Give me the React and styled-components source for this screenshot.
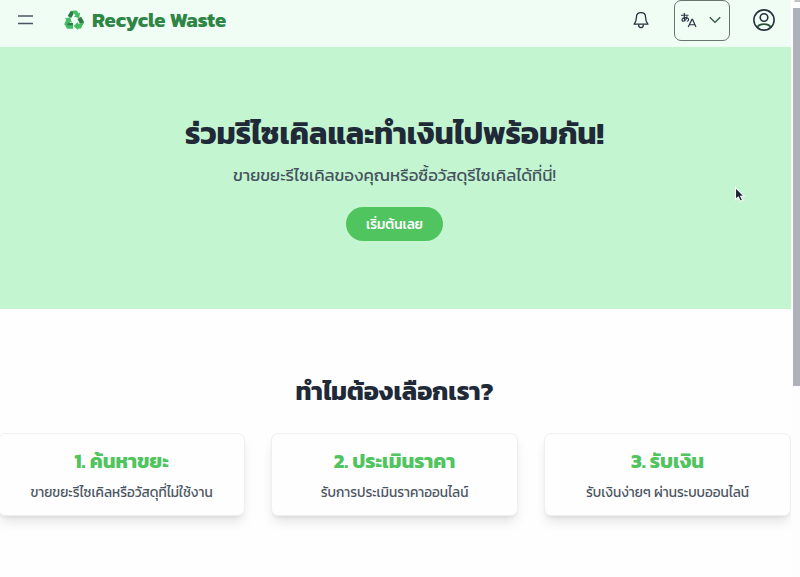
import React from 'react';
import styled, { createGlobalStyle } from 'styled-components';

const GlobalStyle = createGlobalStyle`
  * { box-sizing: border-box; }
  html, body { margin: 0; height: 577px; overflow: hidden; background: #fefefe; }
  body { font-family: Kanit, "Noto Sans", "Noto Sans Thai", sans-serif; color: #1f2937; }
`;

const Shell = styled.div`
  display: flex;
  width: 800px;
  height: 577px;
  position: relative;
`;

const Page = styled.div`
  width: 791px;
  overflow: hidden;
`;

const ScrollTrack = styled.div`
  width: 9px;
  padding: 8px 0 0 1.5px;
  background: #fdfdfd;
`;

const ScrollThumb = styled.div`
  height: 378px;
  background: #aeb1b9;
`;

const ScrollUp = styled.svg`
  position: absolute;
  top: 0;
  right: 0;
  display: block;
`;

const Header = styled.header`
  display: flex;
  align-items: center;
  height: 47px;
  padding: 0 15px 7px 17px;
  background: #f0fdf5;
`;

const Brand = styled.div`
  display: flex;
  align-items: center;
  gap: 8px;
  height: 40px;
  margin-left: 30px;
`;

const Actions = styled.div`
  display: flex;
  align-items: center;
  margin-left: auto;
`;

const LanguageButton = styled.div`
  display: flex;
  align-items: center;
  justify-content: space-between;
  width: 56px;
  height: 41px;
  margin: 0 22px 0 24px;
  padding: 0 8px 1px 5px;
  border: 1px solid #69746f;
  border-radius: 7px;
`;

const Hero = styled.section`
  display: flex;
  flex-direction: column;
  align-items: center;
  height: 261.5px;
  padding: 65px 2px 0 0;
  background: #c3f6d0;
`;

const Line = styled.div`
  display: flex;
  align-items: center;
  justify-content: center;
  height: ${(p) => p.$h}px;
`;

const Text = styled.span`
  white-space: nowrap;
  font-size: ${(p) => p.$size}px;
  font-weight: ${(p) => p.$weight || 400};
  line-height: 1;
  color: ${(p) => p.$color};
`;

const StartButton = styled.div`
  display: flex;
  align-items: center;
  justify-content: center;
  width: 97px;
  height: 34px;
  margin-top: 12px;
  padding-top: 2px;
  border-radius: 17px;
  background: #50c45e;
`;

const Features = styled.section`
  padding-top: 65px;
`;

const FeaturesHeading = styled(Line)`
  padding-right: 2px;
`;

const CardGrid = styled.div`
  display: grid;
  grid-template-columns: repeat(3, 247px);
  gap: 26px;
  margin: 23.5px 0 0 -2px;
`;

const Card = styled.article`
  height: 83px;
  padding: 12px 0 0;
  border: 1px solid #eeeff1;
  border-radius: 7px;
  background: #fefefe;
  box-shadow: 0 8px 12px -2px rgba(0, 0, 0, 0.1), 0 3px 5px -3px rgba(0, 0, 0, 0.1);
`;

const Pointer = styled.svg`
  position: absolute;
  left: 734px;
  top: 186px;
`;

const MenuIcon = () => (
  <svg width="17" height="12" viewBox="0 0 17 12" fill="none" stroke="#4b5563" strokeWidth="1.3">
    <path d="M1 2H16M1 9.5H16" />
  </svg>
);

const RecycleIcon = () => (
  <svg width="20" height="20" viewBox="0 0 20 20">
    <path fill="#43bd63" d="M7 .8 12.5.6 14.6 3.2l1.5-.8-.8 5.8-5.4-1.6 1.6-1L9 2z" />
    <path fill="#2c7b46" d="M6.6 1 9.4 1.8 9.5 4 7.2 8 3.7 6z" />
    <path fill="#43bd63" d="M.7 8.500 6.100 7.200 8 12.900 6.200 12.100 4.400 15.600.3 14.400 2.200 9.700z" />
    <path fill="#43bd63" d="M.3 13.8 3 13.3 9 13.8V18.8H3z" />
    <path fill="#2c7b46" d="M3.8 13H9v2.2H3.2z" />
    <path fill="#2c7b46" d="m13.4 9 3.7-2.3 2.9 5-1.3 3.6-3.1-2.3z" />
    <path fill="#43bd63" d="m19.9 12-2.9 6.5-3.2.2v1.2L9.7 16l4.1-4v1.5l3.2-.1z" />
  </svg>
);

const BellIcon = () => (
  <svg width="18" height="20" viewBox="0 0 18 20" fill="none" stroke="#27313d" strokeWidth="1.3" strokeLinejoin="round">
    <path d="M9 2.7c-2.8 0-4.6 2-4.6 4.8 0 3.5-.5 4.7-2.3 6.7h13.8c-1.8-2-2.3-3.2-2.3-6.7C13.6 4.7 11.8 2.7 9 2.7z" />
    <path d="M6.7 14.5v.8a2.3 2.3 0 0 0 4.6 0v-.8" />
  </svg>
);

const LanguageIcon = () => (
  <svg width="18" height="18" viewBox="0 0 18 18" fill="none" stroke="#27313d" strokeWidth="1.15">
    <path d="M1 4.2h7.500M4.300 2v5.500c0 1.100.3 1.800.9 2.600M7 5.300c-.3 2.600-2 4.900-3.800 4.900-1.900 0-1.700-3.500 2-3.600 2.500 0 3.600.9 3.400 2.100-.1.900-.9 1.400-1.800 1.500" />
    <path d="M8.200 16 11.900 8.400h.6L16 16M9.400 13.700h5.500" />
  </svg>
);

const ChevronIcon = () => (
  <svg width="12" height="8" viewBox="0 0 12 8" fill="none" stroke="#28503a" strokeWidth="1.3">
    <path d="m.8 1.2 5.2 5.2 5.2-5.2" />
  </svg>
);

const ProfileIcon = () => (
  <svg width="24" height="24" viewBox="0 0 24 24" fill="none" stroke="#27313d" strokeWidth="1.6">
    <circle cx="12" cy="12" r="10.1" />
    <circle cx="12" cy="9.5" r="3.8" />
    <path d="M5.4 19c1.2-2 3-2.9 6.6-2.9s5.4.9 6.6 2.9" stroke="#28503a" />
  </svg>
);

const features = [
  { title: '1. ค้นหาขยะ', detail: 'ขายขยะรีไซเคิลหรือวัสดุที่ไม่ใช้งาน' },
  { title: '2. ประเมินราคา', detail: 'รับการประเมินราคาออนไลน์' },
  { title: '3. รับเงิน', detail: 'รับเงินง่ายๆ ผ่านระบบออนไลน์' },
];

export default function App() {
  return (
    <Shell>
      <GlobalStyle />
      <Page>
        <Header>
          <MenuIcon />
          <Brand>
            <RecycleIcon />
            <Text $size={20.3} $weight={700} $color="#2f8545">Recycle Waste</Text>
          </Brand>
          <Actions>
            <BellIcon />
            <LanguageButton>
              <LanguageIcon />
              <ChevronIcon />
            </LanguageButton>
            <ProfileIcon />
          </Actions>
        </Header>
        <Hero>
          <Line $h={44}><Text $size={30.4} $weight={700} $color="#1f2937">ร่วมรีไซเคิลและทำเงินไปพร้อมกัน!</Text></Line>
          <Line $h={39}><Text $size={16.85} $color="#46525f">ขายขยะรีไซเคิลของคุณหรือซื้อวัสดุรีไซเคิลได้ที่นี่!</Text></Line>
          <StartButton><Text $size={13.5} $weight={500} $color="#fff">เริ่มต้นเลย</Text></StartButton>
        </Hero>
        <Features>
          <FeaturesHeading $h={36}><Text $size={25.3} $weight={700} $color="#1f2937">ทำไมต้องเลือกเรา?</Text></FeaturesHeading>
          <CardGrid>
            {features.map((f) => (
              <Card key={f.title}>
                <Line $h={30}><Text $size={20.2} $weight={700} $color="#50c45e">{f.title}</Text></Line>
                <Line $h={34}><Text $size={13.55} $color="#4b5563">{f.detail}</Text></Line>
              </Card>
            ))}
          </CardGrid>
        </Features>
      </Page>
      <ScrollTrack><ScrollThumb /></ScrollTrack>
      <ScrollUp width="7" height="3" viewBox="0 0 7 3"><path d="M2 0h5v2H1z" fill="#bfc2c6" /></ScrollUp>
      <Pointer width="12" height="17" viewBox="0 0 12 17">
        <path d="M1.5 1.5v12l2.8-2.4 2 4.2 2.4-1.1-2-4H10z" fill="#1c2433" stroke="#fff" strokeWidth="1.1" />
      </Pointer>
    </Shell>
  );
}
